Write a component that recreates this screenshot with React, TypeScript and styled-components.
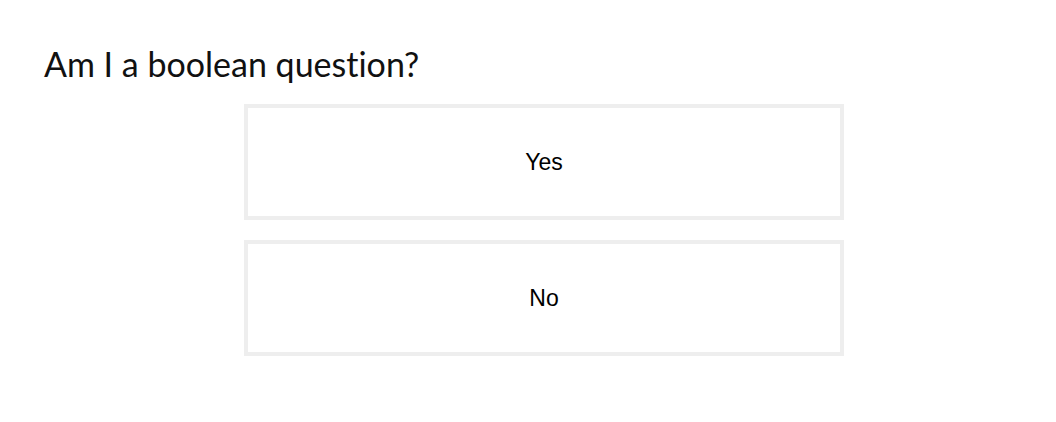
import styled, { createGlobalStyle } from "styled-components";

const GlobalStyle = createGlobalStyle`
  html, body {
    margin: 0;
    padding: 0;
    background: #ffffff;
  }
`;

const Page = styled.div`
  width: 1000px;
  padding: 43px 0 0 44px;
  display: flex;
  flex-direction: column;
`;

const Question = styled.h1`
  margin: 0;
  font-family: Lato, "Open Sans", sans-serif;
  font-weight: 400;
  font-size: 34px;
  line-height: 41px;
  font-variant-ligatures: none;
  color: #111111;
`;

const Choices = styled.div`
  margin-top: 20px;
  display: flex;
  flex-direction: column;
  align-items: center;
  gap: 20px;
`;

const Choice = styled.button`
  box-sizing: border-box;
  width: 600px;
  height: 116px;
  border: 4px solid #eeeeee;
  background: #ffffff;
  font-family: "Liberation Sans", Arial, sans-serif;
  font-size: 23px;
  color: #000000;
  cursor: pointer;
  padding: 0;
`;

export default function App() {
  const options = ["Yes", "No"];

  return (
    <Page>
      <GlobalStyle />
      <Question>Am I a boolean question?</Question>
      <Choices>
        {options.map((option) => (
          <Choice key={option}>{option}</Choice>
        ))}
      </Choices>
    </Page>
  );
}
